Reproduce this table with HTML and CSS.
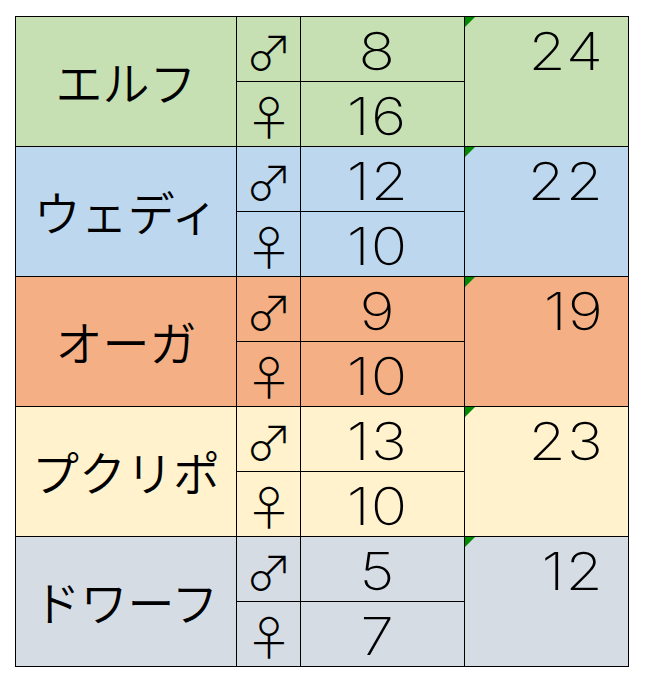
FILE: index.html
```html
<!DOCTYPE html>
<html lang="ja">
<head>
<meta charset="utf-8">
<link rel="stylesheet" href="styles.css">
</head>
<body>
<div class="sheet">
  <div class="name g-green">エルフ</div>
  <div class="sym g-green">♂</div>
  <div class="num g-green"><span class="n">8</span></div>
  <div class="total g-green"><span class="mark"></span><div class="tv"><span class="n">24</span></div></div>
  <div class="sym g-green">♀</div>
  <div class="num g-green"><span class="n">16</span></div>

  <div class="name g-blue">ウェディ</div>
  <div class="sym g-blue">♂</div>
  <div class="num g-blue"><span class="n">12</span></div>
  <div class="total g-blue"><span class="mark"></span><div class="tv"><span class="n">22</span></div></div>
  <div class="sym g-blue">♀</div>
  <div class="num g-blue"><span class="n">10</span></div>

  <div class="name g-orange">オーガ</div>
  <div class="sym g-orange">♂</div>
  <div class="num g-orange"><span class="n">9</span></div>
  <div class="total g-orange"><span class="mark"></span><div class="tv"><span class="n">19</span></div></div>
  <div class="sym g-orange">♀</div>
  <div class="num g-orange"><span class="n">10</span></div>

  <div class="name g-yellow">プクリポ</div>
  <div class="sym g-yellow">♂</div>
  <div class="num g-yellow"><span class="n">13</span></div>
  <div class="total g-yellow"><span class="mark"></span><div class="tv"><span class="n">23</span></div></div>
  <div class="sym g-yellow">♀</div>
  <div class="num g-yellow"><span class="n">10</span></div>

  <div class="name g-gray">ドワーフ</div>
  <div class="sym g-gray">♂</div>
  <div class="num g-gray"><span class="n">5</span></div>
  <div class="total g-gray"><span class="mark"></span><div class="tv"><span class="n">12</span></div></div>
  <div class="sym g-gray">♀</div>
  <div class="num g-gray"><span class="n">7</span></div>
</div>
</body>
</html>
```
FILE: styles.css
```css
html, body {
  margin: 0;
  padding: 0;
  background: #ffffff;
}
body {
  padding: 16px 0 0 15px;
  font-family: "Noto Sans CJK JP", sans-serif;
  color: #000;
}
.sheet {
  display: grid;
  grid-template-columns: 220px 63px 163px 163px;
  grid-auto-rows: 64px;
  gap: 1px;
  padding: 1px;
  background: #000;
  width: max-content;
}
.g-green { background: #c6e0b4; }
.g-blue { background: #bdd7ee; }
.g-orange { background: #f4b084; }
.g-yellow { background: #fff2cc; }
.g-gray { background: #d6dce4; }

.name {
  grid-row: span 2;
  grid-column: 1;
  display: flex;
  align-items: center;
  justify-content: center;
  font-family: "Noto Sans CJK JP", sans-serif;
  font-weight: 350;
  font-size: 47px;
  line-height: 1;
  padding-bottom: 2px;
}
.sym {
  grid-column: 2;
  display: flex;
  align-items: center;
  justify-content: center;
  font-family: "Noto Sans CJK JP", sans-serif;
  font-weight: 300;
  font-size: 47px;
  line-height: 1;
  padding-left: 1px;
}
.num {
  grid-column: 3;
  display: flex;
  align-items: flex-end;
  justify-content: center;
  padding-right: 10px;
  padding-bottom: 3px;
  font-family: "Inter", sans-serif;
  font-weight: 250;
  font-size: 52px;
  line-height: 1;
}
.n {
  display: inline-block;
  transform: scaleX(1.16);
  letter-spacing: 1px;
}
.total {
  grid-column: 4;
  grid-row: span 2;
  position: relative;
}
.tv {
  height: 64px;
  box-sizing: border-box;
  display: flex;
  align-items: flex-end;
  justify-content: flex-end;
  padding-right: 24px;
  padding-bottom: 3px;
  font-family: "Inter", sans-serif;
  font-weight: 250;
  font-size: 52px;
  line-height: 1;
}
.tv .n {
  transform-origin: right center;
}
.mark {
  position: absolute;
  left: 0;
  top: 0;
  width: 0;
  height: 0;
  border-top: 10px solid #008a00;
  border-right: 10px solid transparent;
}
```
